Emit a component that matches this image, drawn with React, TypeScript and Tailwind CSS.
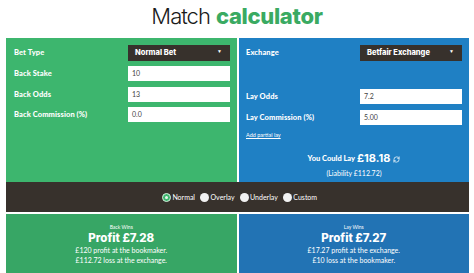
import { RefreshCw } from "lucide-react";

function Field({ label, value, tall }: { label: string; value: string; tall?: boolean }) {
    return (
        <div className={`flex items-center ${tall ? "h-[16px]" : "h-[15px]"}`}>
            <span className="flex-1 text-[7.5px] font-black text-white tracking-[0.1px]">{label}</span>
            <div className="w-[102px] h-full bg-white flex items-center pl-[4px] text-[7px] text-[#444]">{value}</div>
        </div>
    );
}

function Select({ label, value }: { label: string; value: string }) {
    return (
        <div className="flex items-center h-[16px]">
            <span className="flex-1 text-[7.5px] font-black text-white tracking-[0.1px]">{label}</span>
            <div className="w-[102px] h-full bg-[#37312c] flex items-center justify-between pl-[7px] pr-[8px]">
                <span className="text-[7.5px] font-extrabold text-white font-['Inter',sans-serif]">{value}</span>
                <span className="text-[5px] text-white -mt-[3px]">▼</span>
            </div>
        </div>
    );
}

function Radio({ label, checked }: { label: string; checked?: boolean }) {
    return (
        <div className="flex items-center gap-[1.5px]">
            {checked ? (
                <span className="w-[9px] h-[9px] rounded-full bg-[#3db66e] border border-[#d8efe0] flex items-center justify-center">
                    <span className="w-[3px] h-[3px] rounded-full bg-[#e6f6ec]" />
                </span>
            ) : (
                <span className="w-[9px] h-[9px] rounded-full bg-[#f2f2f2]" />
            )}
            <span className="text-[7px] text-white">{label}</span>
        </div>
    );
}

function Result({ title, profit, lines, bg }: { title: string; profit: string; lines: string[]; bg: string }) {
    return (
        <div className={`flex-1 ${bg} flex flex-col items-center pt-[10px] text-white`}>
            <div className="text-[5px] leading-[6px]">{title}</div>
            <div className="text-[11.5px] leading-[14px] font-extrabold font-['Inter',sans-serif] mt-[1px]">{profit}</div>
            {lines.map((l) => (
                <div key={l} className="text-[7px] leading-[10px]">{l}</div>
            ))}
        </div>
    );
}

export default function App() {
    return (
        <div className="w-[474px] h-[273px] bg-white overflow-hidden font-['Lato',sans-serif]">
            {/* Title */}
            <h1 className="h-[38px] flex items-center justify-center gap-[6px] text-[22px] pb-[5px] font-['Inter',sans-serif]">
                <span className="font-light text-[#1a1a1a] tracking-[-1px]">Match</span>
                <span className="font-extrabold text-[#3aaa62] tracking-[-0.3px]">calculator</span>
            </h1>

            <div className="ml-[6px] w-[463px]">
                <div className="flex gap-[2px] h-[144px]">
                    {/* Back side */}
                    <div className="w-[231px] bg-[#3db66e] pl-[8px] pr-[7px] pt-[7px] flex flex-col gap-[5px]">
                        <Select label="Bet Type" value="Normal Bet" />
                        <Field label="Back Stake" value="10" />
                        <div className="mt-[1px]"><Field label="Back Odds" value="13" /></div>
                        <Field label="Back Commission (%)" value="0.0" />
                    </div>

                    {/* Lay side */}
                    <div className="flex-1 bg-[#1f80c4] pl-[7px] pr-[7px] pt-[7px] flex flex-col">
                        <Select label="Exchange" value="Betfair Exchange" />
                        <div className="mt-[28px]"><Field label="Lay Odds" value="7.2" /></div>
                        <div className="mt-[6px]"><Field label="Lay Commission (%)" value="5.00" /></div>
                        <a className="mt-[6px] text-[5.5px] text-white underline">Add partial lay</a>
                        <div className="mt-[11px] flex items-center justify-center gap-[2px] text-white">
                            <span className="text-[7.5px] font-black">You Could Lay</span>
                            <span className="text-[11px] font-bold font-['Inter',sans-serif]">£18.18</span>
                            <RefreshCw size={7} strokeWidth={2.5} className="ml-[1px] mt-[1px]" />
                        </div>
                        <div className="text-center text-[7px] text-white mt-[1px]">(Liability £112.72)</div>
                    </div>
                </div>

                {/* Mode */}
                <div className="h-[30px] bg-[#37312c] flex items-center justify-center gap-[5px] pl-[4px]">
                    <Radio label="Normal" checked />
                    <Radio label="Overlay" />
                    <Radio label="Underlay" />
                    <Radio label="Custom" />
                </div>

                <div className="flex gap-[2px] h-[59px] mt-[2px]">
                    <Result
                        title="Back Wins"
                        profit="Profit £7.28"
                        lines={["£120 profit at the bookmaker.", "£112.72 loss at the exchange."]}
                        bg="bg-[#37a665]"
                    />
                    <Result
                        title="Lay Wins"
                        profit="Profit £7.27"
                        lines={["£17.27 profit at the exchange.", "£10 loss at the bookmaker."]}
                        bg="bg-[#2273b4]"
                    />
                </div>
            </div>
        </div>
    );
}
